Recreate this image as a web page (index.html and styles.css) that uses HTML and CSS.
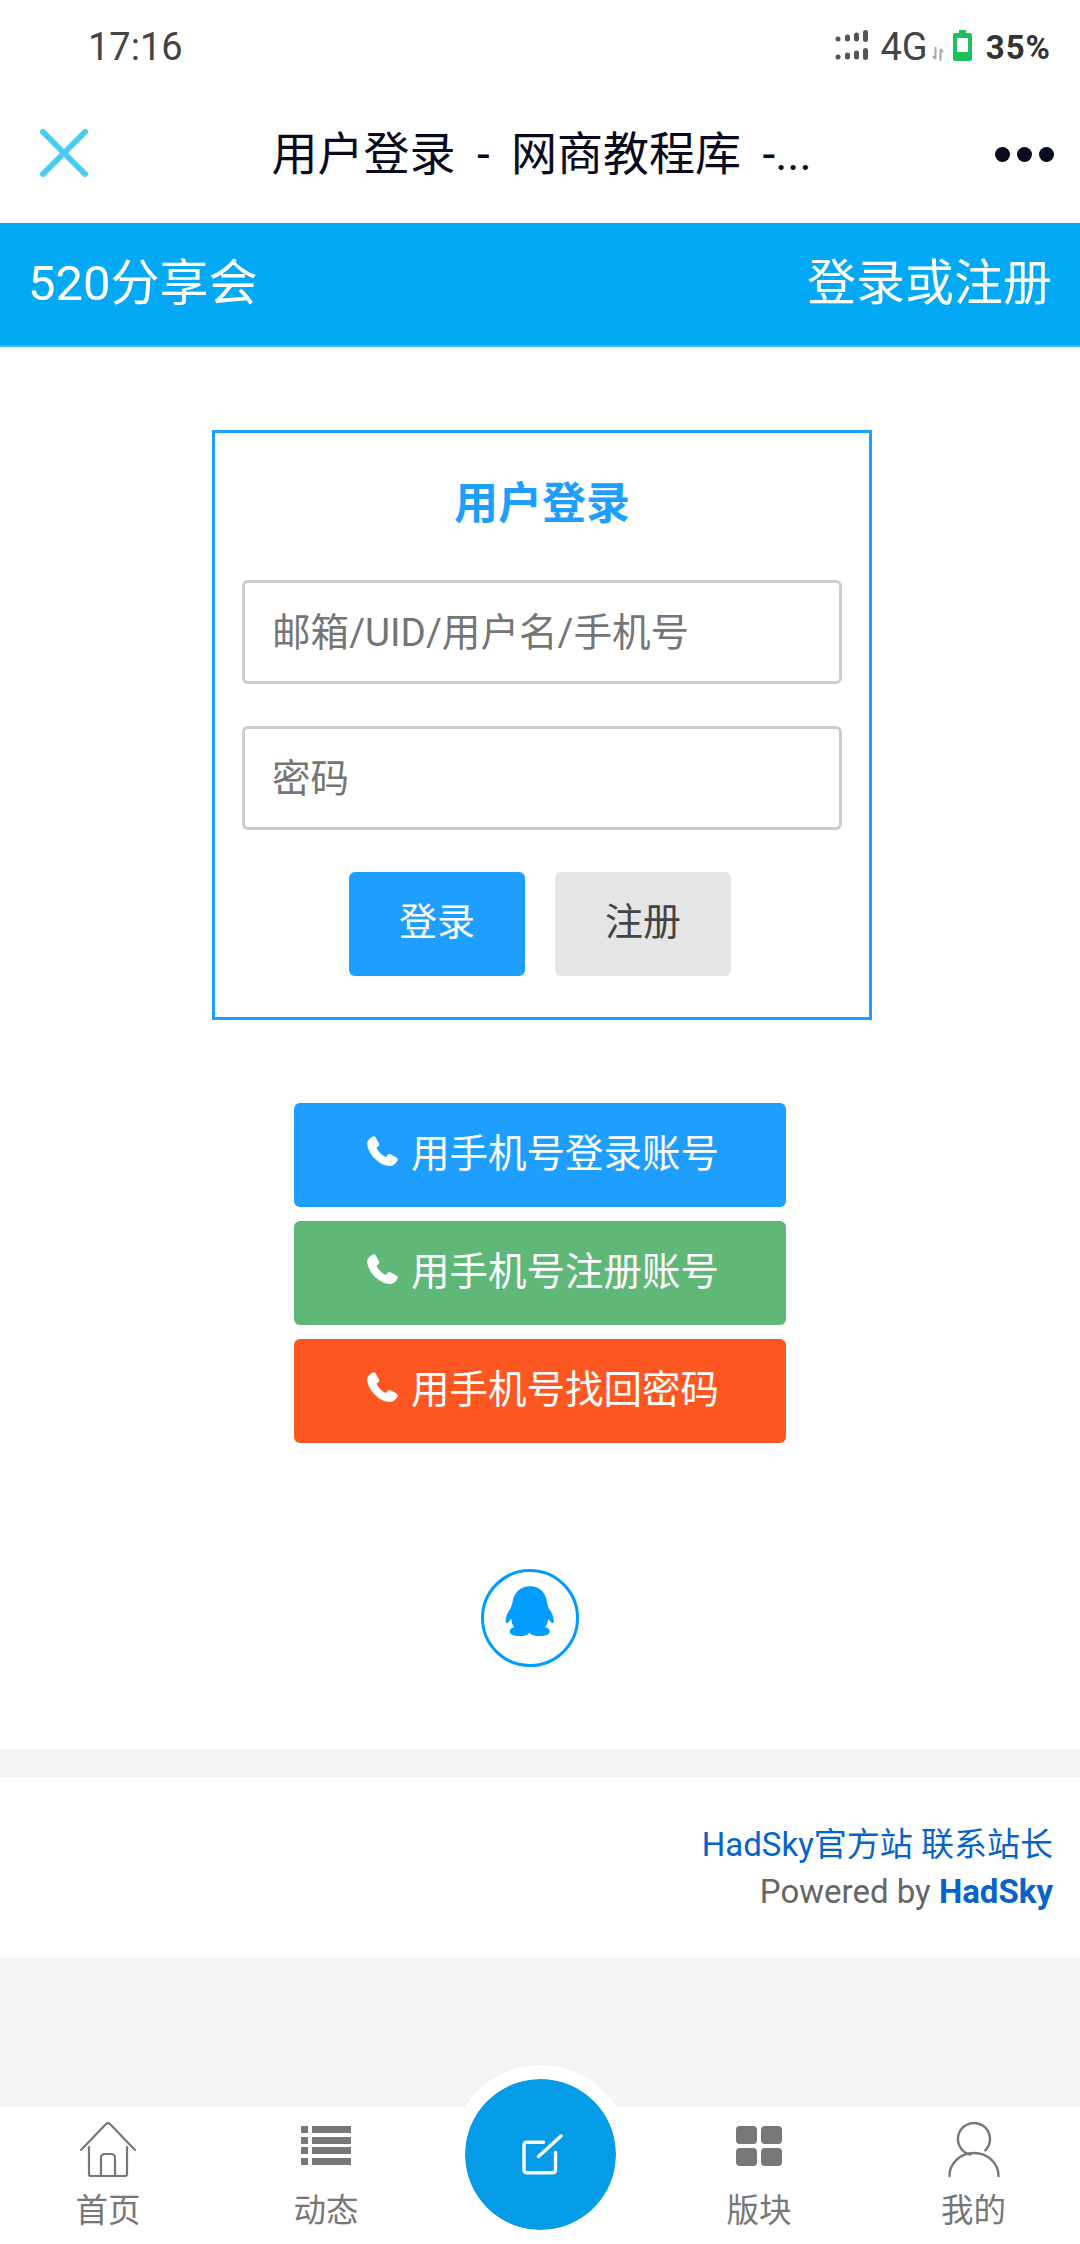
FILE: index.html
```html
<!DOCTYPE html>
<html lang="zh-CN">
<head>
    <meta charset="UTF-8">
    <meta name="viewport" content="width=device-width, initial-scale=1.0">
    <title>用户登录 - 网商教程库</title>
    <link rel="stylesheet" href="styles.css">
</head>
<body>
    <div class="status-bar">
        <span class="status-time">17:16</span>
        <div class="status-right">
            <svg class="signal" width="34" height="30" viewBox="0 0 34 30" fill="#555">
                <circle cx="3" cy="9" r="2.5"/><rect x="10" y="4.500" width="5" height="7" rx="2.500"/><rect x="19" y="2.500" width="5" height="9" rx="2.500"/><rect x="28" y="0" width="5" height="12" rx="2.500"/>
                <circle cx="3" cy="27" r="2.5"/><rect x="10" y="22.500" width="5" height="7" rx="2.500"/><rect x="19" y="20.500" width="5" height="9" rx="2.500"/><rect x="28" y="18" width="5" height="12" rx="2.500"/>
            </svg>
            <span class="net">4G</span>
            <svg class="arrows" width="12" height="14" viewBox="0 0 12 14" fill="none" stroke="#aaa" stroke-width="2">
                <path d="M3.500 0v12M1 9l2.500 3M8.500 14V2M11 5L8.500 2"/>
            </svg>
            <svg class="battery" width="19" height="31" viewBox="0 0 19 31">
                <path d="M6 0h7v3h4a2 2 0 0 1 2 2v24a2 2 0 0 1-2 2H2a2 2 0 0 1-2-2V5a2 2 0 0 1 2-2h4z" fill="#1dbf5a"/>
                <rect x="4" y="8" width="11" height="14" fill="#fff"/>
            </svg>
            <span class="percent">35%</span>
        </div>
    </div>

    <div class="title-bar">
        <svg class="close-icon" width="48" height="48" viewBox="0 0 48 48" fill="none" stroke="#4accf4" stroke-width="6" stroke-linecap="round">
            <path d="M3 3l42 42M45 3L3 45"/>
        </svg>
        <div class="page-title">用户登录 - 网商教程库 -...</div>
        <div class="dots"><i></i><i></i><i></i></div>
    </div>

    <div class="site-header">
        <span>520分享会</span>
        <a href="#">登录或注册</a>
    </div>

    <div class="main">
        <form class="login-box">
            <h2>用户登录</h2>
            <input type="text" placeholder="邮箱/UID/用户名/手机号">
            <input type="password" placeholder="密码">
            <div class="login-btns">
                <button type="button" class="btn btn-blue">登录</button>
                <button type="button" class="btn btn-gray">注册</button>
            </div>
        </form>

        <div class="phone-links">
            <a href="#" class="phone-link btn-blue">
                <svg class="phone-icon" width="31" height="30" viewBox="0 0 31 30"><path d="M6 .5C7.500 0 8.500 1 9 2l3 5.500c.5 1.300 0 2.300-1 3l-1.500 1c1.500 4 5.500 8 9.500 9.500l1.500-2c.8-1 2-1.200 3-.7l6 3.200c1.300.8 1.500 1.800 1 3-1.500 3.500-4.500 5.500-8 5.500C12 29.500 1 18 .2 8 0 5 2.500 2 6 .5z"/></svg>
                用手机号登录账号
            </a>
            <a href="#" class="phone-link btn-green">
                <svg class="phone-icon" width="31" height="30" viewBox="0 0 31 30"><path d="M6 .5C7.500 0 8.500 1 9 2l3 5.500c.5 1.300 0 2.300-1 3l-1.500 1c1.500 4 5.500 8 9.500 9.500l1.500-2c.8-1 2-1.200 3-.7l6 3.200c1.300.8 1.500 1.800 1 3-1.500 3.500-4.500 5.500-8 5.500C12 29.500 1 18 .2 8 0 5 2.500 2 6 .5z"/></svg>
                用手机号注册账号
            </a>
            <a href="#" class="phone-link btn-orange">
                <svg class="phone-icon" width="31" height="30" viewBox="0 0 31 30"><path d="M6 .5C7.500 0 8.500 1 9 2l3 5.500c.5 1.300 0 2.300-1 3l-1.500 1c1.500 4 5.500 8 9.500 9.500l1.500-2c.8-1 2-1.200 3-.7l6 3.200c1.300.8 1.500 1.800 1 3-1.500 3.500-4.500 5.500-8 5.500C12 29.500 1 18 .2 8 0 5 2.500 2 6 .5z"/></svg>
                用手机号找回密码
            </a>
        </div>

        <a href="#" class="qq-link">
            <svg class="qq-icon" width="58" height="58" viewBox="0 0 50 50" fill="#009dff">
                <path d="M25 1c9 0 13.500 6 14.500 13 .4 2.500 1 4 1.600 6 2.500 3 4.400 7 4.400 11 0 2-1.300 2.500-2.500 1-.8-1-1.500-2-2.500-3 .2 3-1 5.500-2.500 7.500 2.500.5 4 1.500 4 3.500 0 3-5 4-9.500 4-3.500 0-6-1-7.500-2.500h-1C23 43 20.500 44 17 44c-4.500 0-9.500-1-9.500-4 0-2 1.500-3 4-3.500C10 34.500 8.800 32 9 29c-1 1-1.700 2-2.500 3-1.200 1.500-2.500 1-2.500-1 0-4 1.900-8 4.400-11 .6-2 1.200-3.500 1.600-6C11.500 7 16 1 25 1z"/>
            </svg>
        </a>
    </div>

    <div class="band"></div>

    <div class="footer">
        <p><a href="#">HadSky官方站</a> <a href="#">联系站长</a></p>
        <p class="powered">Powered by <a href="#"><b>HadSky</b></a></p>
    </div>

    <div class="spacer"></div>

    <div class="bottom-nav">
        <a href="#" class="nav-item">
            <svg width="56" height="56" viewBox="0 0 56 56" fill="none" stroke="#777" stroke-width="2.200" stroke-linecap="round" stroke-linejoin="round">
                <path d="M1 28L26 2q2-2 4 0l25 26"/>
                <path d="M9 25v27q0 2 2 2h34q2 0 2-2V25"/>
                <path d="M21 54V36q0-4 4-4h6q4 0 4 4v18"/>
            </svg>
            <span>首页</span>
        </a>
        <a href="#" class="nav-item nav-list">
            <svg width="56" height="56" viewBox="0 0 56 56" fill="#777">
                <rect x="3" y="4" width="7" height="7"/><rect x="14" y="4" width="39" height="7"/>
                <rect x="3" y="15" width="7" height="7"/><rect x="14" y="15" width="39" height="7"/>
                <rect x="3" y="25" width="7" height="7"/><rect x="14" y="25" width="39" height="7"/>
                <rect x="3" y="36" width="7" height="7"/><rect x="14" y="36" width="39" height="7"/>
            </svg>
            <span>动态</span>
        </a>
        <div class="nav-item nav-center">
            <a href="#" class="post-btn">
                <svg width="44" height="44" viewBox="0 0 44 44" fill="none" stroke="#fff" stroke-width="3.400" stroke-linecap="round" stroke-linejoin="round">
                    <path d="M24.500 9.300H8q-3 0-3 3v24.500q0 3 3 3h25.500q3 0 3-3V19.500"/>
                    <path d="M19.500 23.500L42 3"/>
                </svg>
            </a>
        </div>
        <a href="#" class="nav-item nav-forum">
            <svg width="56" height="56" viewBox="0 0 56 56" fill="#777">
                <rect x="5" y="4" width="21" height="18" rx="4"/><rect x="30" y="4" width="21" height="18" rx="4"/>
                <rect x="5" y="26" width="21" height="18" rx="4"/><rect x="30" y="26" width="21" height="18" rx="4"/>
            </svg>
            <span>版块</span>
        </a>
        <a href="#" class="nav-item nav-me">
            <svg width="56" height="56" viewBox="0 0 56 56" fill="none" stroke="#777" stroke-width="2.400" stroke-linecap="round">
                <path d="M39.300 28.300A16 16 0 1 0 24 32.500"/>
                <path d="M3.500 54a24.500 23 0 0 1 49 0"/>
            </svg>
            <span>我的</span>
        </a>
    </div>
</body>
</html>
```

FILE: styles.css
```css
* {
    margin: 0;
    padding: 0;
    box-sizing: border-box;
}

html, body {
    width: 1080px;
    height: 2244px;
    overflow: hidden;
}

body {
    font-family: Roboto, "Noto Sans CJK SC", sans-serif;
    background: #fff;
    display: flex;
    flex-direction: column;
}

a {
    text-decoration: none;
    color: inherit;
}

/* status bar */
.status-bar {
    height: 94px;
    padding: 0 29px 0 88px;
    display: flex;
    justify-content: space-between;
    align-items: center;
    color: #444;
}

.status-time {
    font-size: 38px;
}

.status-right {
    display: flex;
    align-items: center;
}

.signal,
.battery {
    margin-top: -4px;
}

.net {
    font-size: 38px;
    margin-left: 11px;
}

.arrows {
    margin: 14px 9px 0 4px;
}

.percent {
    font-size: 33px;
    font-weight: 700;
    letter-spacing: 1px;
    margin-left: 14px;
    color: #333;
}

/* title bar */
.title-bar {
    height: 129px;
    padding: 0 26px 12px 40px;
    display: flex;
    align-items: center;
    justify-content: space-between;
}

.page-title {
    font-size: 46px;
    word-spacing: 10px;
    color: #0a0a1e;
    white-space: nowrap;
    margin-bottom: 6px;
}

.dots {
    display: flex;
    gap: 7px;
    margin-top: 4px;
}

.dots i {
    width: 15px;
    height: 15px;
    border-radius: 50%;
    background: #0a0a1e;
}

/* blue header */
.site-header {
    height: 124px;
    padding: 0 28px 12px 28px;
    background: #03a9f4;
    border-bottom: 2px solid #3bb9f6;
    color: #fff;
    font-size: 49px;
    display: flex;
    align-items: center;
    justify-content: space-between;
}

/* login */
.main {
    height: 1402px;
    padding-top: 83px;
    display: flex;
    flex-direction: column;
    align-items: center;
}

.login-box {
    width: 660px;
    height: 590px;
    margin-left: 4px;
    border: 3px solid #1e9fff;
    padding: 0 27px;
    text-align: center;
}

.login-box h2 {
    height: 147px;
    line-height: 143px;
    font-size: 44px;
    font-weight: 700;
    color: #1e9fff;
}

.login-box input {
    display: block;
    width: 100%;
    height: 104px;
    margin-bottom: 42px;
    padding: 0 27px;
    border: 3px solid #ccc;
    border-radius: 6px;
    font-family: inherit;
    font-size: 38.6px;
    outline: none;
}

.login-box input::placeholder {
    color: #757575;
}

.login-btns {
    display: flex;
    justify-content: center;
    gap: 30px;
    margin-left: -4px;
}

.btn {
    width: 176px;
    height: 104px;
    padding-bottom: 11px;
    border: none;
    border-radius: 6px;
    font-family: inherit;
    font-size: 38px;
}

.btn-blue {
    background: #1e9fff;
    color: #fff;
}

.btn-gray {
    background: #e5e5e5;
    color: #444;
}

.btn-green {
    background: #5fb878;
}

.btn-orange {
    background: #ff5722;
}

.phone-links {
    margin-top: 83px;
    width: 492px;
    display: flex;
    flex-direction: column;
    gap: 14px;
}

.phone-link {
    height: 104px;
    padding: 0 0 10px 6px;
    border-radius: 6px;
    color: #fff;
    font-size: 38.5px;
    display: flex;
    align-items: center;
    justify-content: center;
    gap: 13px;
}

.phone-icon {
    fill: #fff;
    margin-top: 2px;
}

.qq-link {
    margin-top: 126px;
    margin-left: -20px;
    width: 98px;
    height: 98px;
    border: 3px solid #009dff;
    border-radius: 50%;
    display: flex;
    align-items: center;
    justify-content: center;
}

.qq-icon {
    margin-top: -8px;
}

/* footer */
.band {
    height: 28px;
    background: #f4f4f4;
}

.footer {
    height: 181px;
    padding-top: 43px;
    padding-right: 27px;
    font-size: 33px;
    line-height: 50px;
    text-align: right;
    color: #666;
}

.footer a {
    color: #0563c9;
}

.powered {
    margin-top: -3px;
}

.spacer {
    flex: 1;
    background: #f4f4f4;
}

/* bottom nav */
.bottom-nav {
    height: 137px;
    background: #fff;
    display: grid;
    grid-template-columns: repeat(5, 216px);
    position: relative;
}

.nav-item {
    padding-top: 15px;
    display: flex;
    flex-direction: column;
    align-items: center;
    color: #777;
    font-size: 32.5px;
    line-height: 44px;
}

.nav-item span {
    margin-top: 11px;
}

.nav-list {
    padding-left: 4px;
}

.nav-forum {
    padding-left: 6px;
}

.nav-me {
    padding-left: 3px;
}

.post-btn {
    position: absolute;
    top: -42px;
    left: 451px;
    width: 179px;
    height: 179px;
    border: 14px solid #fff;
    border-radius: 50%;
    background: #049ce6;
    background-clip: padding-box;
    display: flex;
    align-items: center;
    justify-content: center;
}
```
